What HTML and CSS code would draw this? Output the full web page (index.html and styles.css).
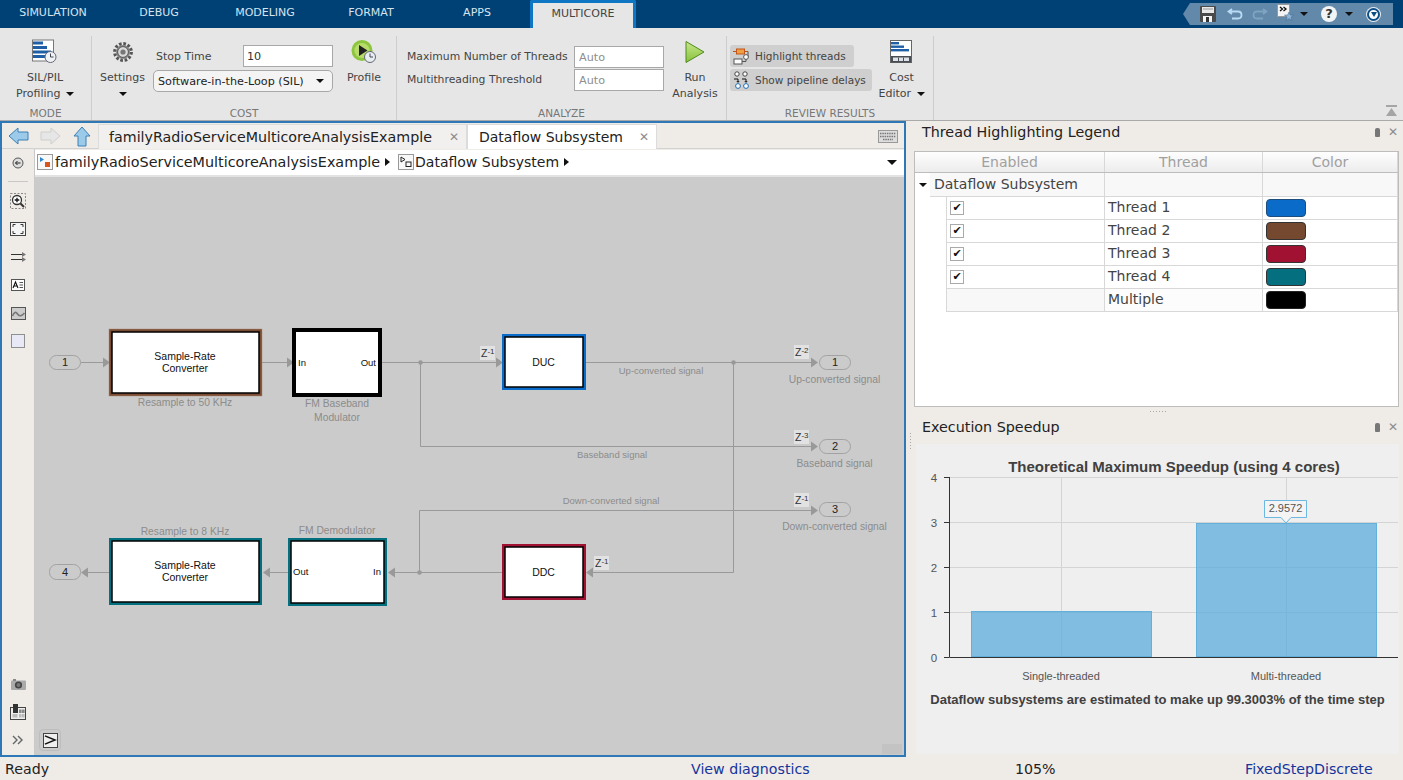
FILE: index.html
```html
<!DOCTYPE html>
<html lang="en">
<head>
<meta charset="utf-8">
<title>Multicore</title>
<link rel="stylesheet" href="styles.css">
</head>
<body>
<div class="app">
  <header class="topbar">
    <nav class="tabs">
      <div class="tab">SIMULATION</div>
      <div class="tab">DEBUG</div>
      <div class="tab">MODELING</div>
      <div class="tab">FORMAT</div>
      <div class="tab">APPS</div>
      <div class="tab tab-active">MULTICORE</div>
    </nav>
    <div class="qa">
      <svg class="qa-notch" width="7" height="22" viewBox="0 0 7 22"><polygon points="7,0 7,22 0,11" fill="#6288aa"/></svg>
      <div class="qa-bar">
        <svg width="16" height="16" viewBox="0 0 16 16"><rect x="0" y="0" width="16" height="16" rx="1" fill="#4a4a4a"/><rect x="2" y="1" width="12" height="6" fill="#e8e8e8"/><rect x="3" y="2.5" width="10" height="1" fill="#999"/><rect x="3" y="10" width="9" height="6" fill="#f4f4f4"/><rect x="6" y="11" width="3" height="5" fill="#333"/></svg>
        <svg class="qa-undo" width="16" height="14" viewBox="0 0 16 14"><path d="M5 2 L1.5 4.5 L5 7 M2 4.5 H11 Q14.5 4.5 14.5 8 Q14.5 11.5 11 11.5 H5" fill="none" stroke="#b9dcf5" stroke-width="1.8"/></svg>
        <svg class="qa-redo" width="16" height="14" viewBox="0 0 16 14"><path d="M11 2 L14.5 4.5 L11 7 M14 4.5 H5 Q1.5 4.5 1.5 8 Q1.5 11.5 5 11.5 H11" fill="none" stroke="#7fa3c0" stroke-width="1.8"/></svg>
        <svg class="qa-fav" width="17" height="17" viewBox="0 0 17 17"><rect x="0.5" y="0.5" width="12" height="12" fill="#f4f4f4" stroke="#999"/><path d="M3 3 L5.5 5 L3 7 M6.5 3 L9 5 L6.5 7" fill="none" stroke="#111" stroke-width="1.3"/><polygon points="12,8 13.3,11 16.5,11.2 14,13.2 15,16.5 12,14.7 9,16.5 10,13.2 7.5,11.2 10.7,11" fill="#8eb4d8" stroke="#4a6f92" stroke-width="0.6"/></svg>
        <span class="caret caret-qa"></span>
        <span class="qa-help">?</span>
        <span class="caret caret-qa2"></span>
        <span class="qa-circle"><span class="qa-circle-tri"></span></span>
      </div>
    </div>
  </header>

  <section class="ribbon">
    <div class="rsec rsec-mode">
      <div class="rbody">
        <div class="bigbtn bigbtn-mode">
          <svg class="bigicon" width="26" height="25" viewBox="0 0 26 25"><rect x="0.5" y="0.5" width="21" height="21" fill="#fff" stroke="#777"/><rect x="1" y="2" width="10" height="3" fill="#1f5fa6"/><rect x="1" y="6.5" width="14" height="3" fill="#1f5fa6"/><rect x="1" y="11" width="18" height="3" fill="#1f5fa6"/><rect x="1" y="15.5" width="13" height="3" fill="#1f5fa6"/><circle cx="18.5" cy="17.5" r="5.5" fill="#eef2f5" stroke="#667"/><path d="M18.5 14 V17.5 H21.5" fill="none" stroke="#445" stroke-width="1"/></svg>
          <span class="btxt">SIL/PIL</span>
          <span class="btxt">Profiling <span class="caret caret-inline"></span></span>
        </div>
      </div>
      <div class="rlabel">MODE</div>
    </div>

    <div class="rsec rsec-cost">
      <div class="rbody">
        <div class="bigbtn bigbtn-settings">
          <svg class="bigicon" width="22" height="22" viewBox="0 0 22 22"><circle cx="11" cy="11" r="8.2" fill="none" stroke="#555" stroke-width="3.4" stroke-dasharray="2.6 1.7"/><circle cx="11" cy="11" r="7" fill="#888"/><circle cx="11" cy="11" r="5.4" fill="#d9d9d9" stroke="#555"/><circle cx="11" cy="11" r="2.6" fill="#777"/></svg>
          <span class="btxt">Settings</span>
          <span class="btxt"><span class="caret"></span></span>
        </div>
        <div class="cost-fields">
          <div class="stop-row">
            <span class="flabel">Stop Time</span>
            <input class="field field-stop" value="10" readonly>
          </div>
          <div class="dropdown">Software-in-the-Loop (SIL)<span class="caret"></span></div>
        </div>
        <div class="bigbtn bigbtn-profile">
          <svg class="bigicon" width="26" height="24" viewBox="0 0 26 24"><circle cx="11" cy="10.5" r="10.5" fill="#8cc63f"/><circle cx="11" cy="10.5" r="7.6" fill="#b8dc6a"/><polygon points="8,5 8,16 16.5,10.5" fill="#222"/><circle cx="19" cy="17" r="5.5" fill="#e8edf1" stroke="#667"/><path d="M19 13.5 V17 H22" fill="none" stroke="#445"/></svg>
          <span class="btxt">Profile</span>
        </div>
      </div>
      <div class="rlabel">COST</div>
    </div>

    <div class="rsec rsec-analyze">
      <div class="rbody">
        <div class="analyze-grid">
          <span class="flabel">Maximum Number of Threads</span>
          <input class="field field-auto" placeholder="Auto" readonly>
          <span class="flabel">Multithreading Threshold</span>
          <input class="field field-auto" placeholder="Auto" readonly>
        </div>
        <div class="bigbtn bigbtn-run">
          <svg class="bigicon" width="20" height="23" viewBox="0 0 20 23"><defs><linearGradient id="rung" x1="0" y1="0" x2="0" y2="1"><stop offset="0" stop-color="#c8e68a"/><stop offset="1" stop-color="#86c23c"/></linearGradient></defs><polygon points="1,1 1,22 19,11.5" fill="url(#rung)" stroke="#4f8a1e"/></svg>
          <span class="btxt">Run</span>
          <span class="btxt">Analysis</span>
        </div>
      </div>
      <div class="rlabel">ANALYZE</div>
    </div>

    <div class="rsec rsec-review">
      <div class="rbody">
        <div class="toggles">
          <div class="toggle toggle-a">
            <svg width="17" height="17" viewBox="0 0 17 17"><rect x="3.5" y="1" width="8" height="5" fill="#f0a040" stroke="#c0541a"/><line x1="0" y1="3.5" x2="3.5" y2="3.5" stroke="#c0541a"/><line x1="11.5" y1="3.5" x2="15" y2="3.5" stroke="#c0541a"/><path d="M15 3.5 V9" stroke="#555" fill="none"/><circle cx="13" cy="9" r="2.4" fill="#fff" stroke="#555"/><rect x="1" y="11" width="8" height="5" fill="#fff" stroke="#555"/><path d="M9 13.5 H13 V11" stroke="#555" fill="none"/></svg>
            <span>Highlight threads</span>
          </div>
          <div class="toggle toggle-b">
            <svg width="17" height="18" viewBox="0 0 17 18"><circle cx="4" cy="3" r="2.2" fill="#fff" stroke="#444"/><circle cx="12" cy="3" r="2.2" fill="#fff" stroke="#444"/><circle cx="5" cy="15" r="2.4" fill="#fff" stroke="#1f6fb5"/><circle cx="13" cy="15" r="2.4" fill="#fff" stroke="#1f6fb5"/><path d="M1 8 H5 V11 M3.8 10 L5 11.4 L6.2 10 M9 8 H13 V11 M11.8 10 L13 11.4 L14.2 10" fill="none" stroke="#111"/></svg>
            <span>Show pipeline delays</span>
          </div>
        </div>
        <div class="bigbtn bigbtn-cost">
          <svg class="bigicon" width="23" height="24" viewBox="0 0 23 24"><rect x="0.5" y="0.5" width="21" height="22" fill="#fff" stroke="#666"/><rect x="1" y="2" width="8" height="2.4" fill="#1f5fa6"/><rect x="1" y="5.5" width="13" height="2.4" fill="#1f5fa6"/><rect x="1" y="9" width="18" height="2.4" fill="#1f5fa6"/><rect x="1" y="16" width="20" height="6.5" fill="#4a4f55"/><rect x="3" y="17.5" width="16" height="3.5" fill="#dde3e8"/><path d="M8.5 17.5 V21 M13.5 17.5 V21" stroke="#4a4f55"/></svg>
          <span class="btxt">Cost</span>
          <span class="btxt">Editor <span class="caret caret-inline"></span></span>
        </div>
      </div>
      <div class="rlabel">REVIEW RESULTS</div>
    </div>

    <div class="rsec-rest">
      <svg class="collapse" width="11" height="11" viewBox="0 0 11 11"><rect x="0" y="0" width="11" height="2" fill="#a5a5a5"/><polygon points="5.5,3 11,11 0,11" fill="#a5a5a5"/></svg>
    </div>
  </section>

  <main class="main">
    <section class="editor">
      <div class="ed-tabs">
        <div class="hist">
          <svg width="21" height="18" viewBox="0 0 21 18"><polygon points="1,9 10,1 10,5 20,5 20,13 10,13 10,17" fill="#9ccbea" stroke="#3d7fb5"/></svg>
          <svg width="21" height="18" viewBox="0 0 21 18"><polygon points="20,9 11,1 11,5 1,5 1,13 11,13 11,17" fill="#e6e6e6" stroke="#cfcfcf"/></svg>
          <svg width="18" height="21" viewBox="0 0 18 21"><polygon points="9,1 17,10 13,10 13,20 5,20 5,10 1,10" fill="#9ccbea" stroke="#3d7fb5"/></svg>
        </div>
        <div class="dtab">
          <span>familyRadioServiceMulticoreAnalysisExample</span><span class="x">✕</span>
        </div>
        <div class="dtab dtab-on">
          <span>Dataflow Subsystem</span><span class="x">✕</span>
        </div>
        <svg class="kbd" width="20" height="13" viewBox="0 0 20 13"><rect x="0.5" y="0.5" width="19" height="12" fill="#ddd" stroke="#999"/><path d="M2 3.5 H18 M2 6.5 H18 M5 9.5 H15" stroke="#777" stroke-width="1.6" stroke-dasharray="1.5 .8"/></svg>
      </div>
      <div class="ed-body">
        <aside class="palette">
          <div class="pal-top">
            <div class="pal-slot"><svg width="12" height="12" viewBox="0 0 12 12"><circle cx="6" cy="6" r="5" fill="#ddd" stroke="#555"/><path d="M8.5 6 H3.5 M5.5 4 L3.5 6 L5.5 8" fill="none" stroke="#222"/></svg></div>
            <div class="pal-sep"></div>
            <div class="pal-slot"><svg width="16" height="16" viewBox="0 0 16 16"><rect x="0.5" y="0.5" width="15" height="15" fill="none" stroke="#888" stroke-dasharray="2 1.5"/><circle cx="7" cy="7" r="4.5" fill="#fff" stroke="#333" stroke-width="1.3"/><path d="M4.7 7 H9.3 M7 4.7 V9.3" stroke="#111" stroke-width="1.3"/><path d="M10.5 10.5 L14 14" stroke="#333" stroke-width="2"/></svg></div>
            <div class="pal-slot"><svg width="16" height="14" viewBox="0 0 16 14"><rect x="0.5" y="0.5" width="15" height="13" fill="#f5f5f5" stroke="#444"/><path d="M3 5 V2.5 H5.5 M10.5 2.5 H13 V5 M13 9 V11.5 H10.5 M5.5 11.5 H3 V9" fill="none" stroke="#333"/></svg></div>
            <div class="pal-slot"><svg width="15" height="10" viewBox="0 0 15 10"><path d="M0 2.5 H13 M0 7.5 H13" stroke="#333"/><polygon points="11,0 15,2.5 11,5" fill="#777"/><polygon points="11,5 15,7.5 11,10" fill="#777"/></svg></div>
            <div class="pal-slot"><svg width="14" height="12" viewBox="0 0 14 12"><rect x="0.5" y="0.5" width="13" height="11" fill="#fff" stroke="#555"/><path d="M2 9 L4.5 3 L7 9 M3 7 H6" fill="none" stroke="#111" stroke-width="1.1"/><path d="M8.5 3.5 H12 M8.5 6 H12 M8.5 8.5 H12" stroke="#555"/></svg></div>
            <div class="pal-slot"><svg width="15" height="13" viewBox="0 0 15 13"><rect x="0.5" y="0.5" width="14" height="12" fill="#ccc" stroke="#555"/><path d="M1.5 9 Q4 3 6.5 7 T13.5 6" fill="none" stroke="#777" stroke-width="1.6"/></svg></div>
            <div class="pal-slot"><div class="pal-rect"></div></div>
          </div>
          <div class="pal-bottom">
            <div class="pal-slot"><svg width="15" height="11" viewBox="0 0 15 11"><rect x="0" y="1.5" width="15" height="9.5" rx="1" fill="#aaa"/><rect x="2" y="0" width="3" height="2" fill="#888"/><circle cx="7.5" cy="6" r="3.6" fill="#444"/><circle cx="7.5" cy="6" r="2" fill="#777"/></svg></div>
            <div class="pal-slot"><svg width="16" height="16" viewBox="0 0 16 16"><rect x="0.5" y="3.5" width="15" height="12" fill="#eee" stroke="#444"/><rect x="3" y="0" width="5" height="9" fill="#333"/><rect x="9" y="5.5" width="2.6" height="3.5" fill="#888"/><rect x="12" y="5.5" width="2.6" height="3.5" fill="#888"/><rect x="9" y="10" width="2.6" height="3.5" fill="#bbb"/><rect x="12" y="10" width="2.6" height="3.5" fill="#bbb"/><rect x="2.5" y="10" width="5" height="3.5" fill="#bbb"/></svg></div>
            <div class="pal-slot"><svg width="12" height="10" viewBox="0 0 12 10"><path d="M1 1 L5 5 L1 9 M6 1 L10 5 L6 9" fill="none" stroke="#666" stroke-width="1.4"/></svg></div>
          </div>
        </aside>
        <div class="ed-right">
          <div class="crumbs">
            <svg width="16" height="16" viewBox="0 0 16 16"><rect x="0.5" y="0.5" width="15" height="15" fill="#f8f8f8" stroke="#999"/><polygon points="3,3 3,8 7,5.5" fill="#2d86c9"/><rect x="8" y="8" width="5" height="5" fill="#d9541e"/></svg>
            <span class="crumb">familyRadioServiceMulticoreAnalysisExample</span>
            <span class="tri-right"></span>
            <svg width="16" height="16" viewBox="0 0 16 16"><rect x="0.5" y="0.5" width="15" height="15" fill="#f8f8f8" stroke="#999"/><path d="M3 3 L7 5.5 L3 8 Z" fill="none" stroke="#222"/><rect x="8" y="8" width="5" height="4.5" fill="none" stroke="#222"/></svg>
            <span class="crumb crumb-2">Dataflow Subsystem</span>
            <span class="tri-right"></span>
            <span class="caret caret-crumb"></span>
          </div>
          <div class="canvas">
            <svg class="diagram" width="869" height="580" viewBox="35 177 869 580">
              <g class="wires">
                <path d="M81 362.5H105"/>
                <path d="M262 362.5H288"/>
                <path d="M382 362.5H498"/>
                <path d="M420.5 362.5V446.5H813"/>
                <path d="M586 362.5H813"/>
                <path d="M733.5 362.5V572.5H590"/>
                <path d="M502 572.5H391"/>
                <path d="M419.5 572.5V510.5H813"/>
                <path d="M288 572.5H266"/>
                <path d="M109 572.5H85"/>
              </g>
              <g class="dots">
                <circle cx="420.5" cy="362.5" r="2.3"/>
                <circle cx="733.5" cy="362.5" r="2.3"/>
                <circle cx="419.5" cy="572.5" r="2.3"/>
              </g>
              <g class="arrows">
                <polygon points="103,357.5 103,367.5 110,362.5"/>
                <polygon points="287,357.5 287,367.5 294,362.5"/>
                <polygon points="496,357.5 496,367.5 503,362.5"/>
                <polygon points="811,357.5 811,367.5 818,362.5"/>
                <polygon points="811,441.5 811,451.5 818,446.5"/>
                <polygon points="811,505.5 811,515.5 818,510.5"/>
                <polygon points="593,567.5 593,577.5 586,572.5"/>
                <polygon points="395,567.5 395,577.5 388,572.5"/>
                <polygon points="270,567.5 270,577.5 263,572.5"/>
                <polygon points="88,567.5 88,577.5 81,572.5"/>
              </g>
              <g class="ports">
                <rect x="49.5" y="355.5" width="31" height="14" rx="7"/>
                <rect x="819.5" y="355.5" width="31" height="14" rx="7"/>
                <rect x="819.5" y="439.5" width="31" height="14" rx="7"/>
                <rect x="819.5" y="502.5" width="31" height="14" rx="7"/>
                <rect x="49.5" y="564.5" width="31" height="15" rx="7"/>
              </g>
              <g class="port-txt">
                <text x="65" y="366">1</text>
                <text x="835" y="366">1</text>
                <text x="835" y="450">2</text>
                <text x="835" y="513">3</text>
                <text x="65" y="576">4</text>
              </g>

              <rect class="b-brown" x="109" y="329" width="153" height="67"/>
              <rect class="b-inner" x="112" y="332" width="147" height="61"/>
              <rect class="b-black" x="294" y="330" width="86" height="65"/>
              <rect class="b-blue" x="502" y="334" width="84" height="56"/>
              <rect class="b-inner" x="505" y="337" width="78" height="50"/>
              <rect class="b-teal" x="109" y="538" width="153" height="67"/>
              <rect class="b-inner" x="112" y="541" width="147" height="61"/>
              <rect class="b-teal" x="288" y="538" width="99" height="68"/>
              <rect class="b-inner" x="291" y="541" width="93" height="62"/>
              <rect class="b-red" x="502" y="544" width="84" height="56"/>
              <rect class="b-inner" x="505" y="547" width="78" height="50"/>

              <g class="btxt-d">
                <text x="185" y="360">Sample-Rate</text>
                <text x="185" y="372">Converter</text>
                <text x="185" y="569">Sample-Rate</text>
                <text x="185" y="581">Converter</text>
                <text x="543.5" y="366">DUC</text>
                <text x="543.5" y="576">DDC</text>
              </g>
              <g class="ptxt-d">
                <text x="298" y="366">In</text>
                <text x="293" y="575">Out</text>
              </g>
              <g class="ptxt-d ptxt-end">
                <text x="376" y="366">Out</text>
                <text x="381" y="575">In</text>
              </g>
              <g class="glabels">
                <text x="185" y="406">Resample to 50 KHz</text>
                <text x="337" y="407">FM Baseband</text>
                <text x="337" y="421">Modulator</text>
                <text x="185" y="535">Resample to 8 KHz</text>
                <text x="337" y="534">FM Demodulator</text>
                <text class="small" x="661" y="374">Up-converted signal</text>
                <text class="small" x="612" y="458">Baseband signal</text>
                <text class="small" x="611" y="504">Down-converted signal</text>
                <text x="834.5" y="383">Up-converted signal</text>
                <text x="834.5" y="467">Baseband signal</text>
                <text x="834.5" y="530">Down-converted signal</text>
              </g>
              <g class="zbox">
                <rect x="480" y="346" width="15" height="14"/>
                <rect x="794" y="345" width="15" height="14"/>
                <rect x="794" y="430" width="15" height="14"/>
                <rect x="794" y="493" width="15" height="14"/>
                <rect x="594" y="556" width="15" height="14"/>
              </g>
              <g class="ztxt">
                <text x="481" y="357">Z<tspan class="sup" dy="-3">-1</tspan></text>
                <text x="795" y="356">Z<tspan class="sup" dy="-3">-2</tspan></text>
                <text x="795" y="441">Z<tspan class="sup" dy="-3">-3</tspan></text>
                <text x="795" y="504">Z<tspan class="sup" dy="-3">-1</tspan></text>
                <text x="595" y="567">Z<tspan class="sup" dy="-3">-1</tspan></text>
              </g>
              <g class="grip">
                <rect x="882" y="744" width="20" height="10"/>
              </g>
            </svg>
            <div class="cmd-wrap"><div class="cmd"><svg width="14" height="12" viewBox="0 0 14 12"><path d="M1 1.5 L12 6 L1 10.5" fill="none" stroke="#111" stroke-width="1.6"/></svg></div></div>
          </div>
        </div>
      </div>
    </section>

    <aside class="side">
      <div class="ptitle">
        <span>Thread Highlighting Legend</span>
        <span class="pctrl"><span class="pin"></span><span class="x">✕</span></span>
      </div>
      <div class="tablebox">
        <div class="trow thead"><div>Enabled</div><div>Thread</div><div>Color</div></div>
        <div class="trow tgroup">
          <div class="tg-first"><span class="tg-arrow"><span class="caret"></span></span><span class="tg-name">Dataflow Subsystem</span></div>
          <div></div><div></div>
        </div>
        <div class="trow tdata">
          <div class="tcheck"><span class="chk">✔</span></div><div>Thread 1</div><div class="tcolor"><span class="swatch s1"></span></div>
        </div>
        <div class="trow tdata">
          <div class="tcheck"><span class="chk">✔</span></div><div>Thread 2</div><div class="tcolor"><span class="swatch s2"></span></div>
        </div>
        <div class="trow tdata">
          <div class="tcheck"><span class="chk">✔</span></div><div>Thread 3</div><div class="tcolor"><span class="swatch s3"></span></div>
        </div>
        <div class="trow tdata">
          <div class="tcheck"><span class="chk">✔</span></div><div>Thread 4</div><div class="tcolor"><span class="swatch s4"></span></div>
        </div>
        <div class="trow tdata tmulti">
          <div class="tcheck"></div><div>Multiple</div><div class="tcolor"><span class="swatch s5"></span></div>
        </div>
      </div>
      <div class="splitter"></div>
      <div class="ptitle ptitle-2">
        <span>Execution Speedup</span>
        <span class="pctrl"><span class="pin"></span><span class="x">✕</span></span>
      </div>
      <div class="chartbox">
        <svg class="chart" width="483" height="310" viewBox="916 444 483 310">
          <text class="c-title" x="1174" y="472">Theoretical Maximum Speedup (using 4 cores)</text>
          <g class="c-grid">
            <path d="M949 477.5H1398M949 522.5H1398M949 567.5H1398M949 612.5H1398"/>
            <path d="M1061.5 477V657M1286.5 477V657"/>
          </g>
          <rect class="c-bar" x="971.5" y="611.5" width="180" height="45"/>
          <rect class="c-bar" x="1196.5" y="523.5" width="180" height="133"/>
          <g class="c-axis">
            <path d="M949.5 477V657.5H1398"/>
            <path d="M944 477.5H949M944 522.5H949M944 567.5H949M944 612.5H949M944 657.5H949"/>
          </g>
          <g class="c-num">
            <text x="934" y="482">4</text>
            <text x="934" y="527">3</text>
            <text x="934" y="572">2</text>
            <text x="934" y="617">1</text>
            <text x="934" y="662">0</text>
          </g>
          <path class="c-tip" d="M1264.5 500.5H1306.5V517.5H1291L1286 523L1281 517.5H1264.5Z"/>
          <text class="c-tiptxt" x="1285.5" y="512">2.9572</text>
          <text class="c-cat" x="1061" y="680">Single-threaded</text>
          <text class="c-cat" x="1286" y="680">Multi-threaded</text>
          <text class="c-note" x="1157.5" y="704">Dataflow subsystems are estimated to make up 99.3003% of the time step</text>
        </svg>
      </div>
    </aside>
  </main>

  <footer class="status">
    <span class="st-ready">Ready</span>
    <span class="st-link st-diag">View diagnostics</span>
    <span class="st-zoom">105%</span>
    <span class="st-link st-solver">FixedStepDiscrete</span>
  </footer>
</div>
</body>
</html>
```
FILE: styles.css
```css
* { box-sizing: border-box; }
html, body { margin: 0; padding: 0; height: 100%; overflow: hidden; }
body { font-family: "DejaVu Sans", sans-serif; color: #222; background: #efebe7; }
.app { width: 1403px; height: 780px; display: flex; flex-direction: column; }

/* top bar */
.topbar { height: 28px; background: #004175; display: flex; justify-content: space-between; flex: none; padding-right: 10px; }
.tabs { display: flex; }
.tab { width: 106px; height: 28px; line-height: 26px; text-align: center; font-size: 11px; color: #d6e4ef; }
.tab-active { background: #e6e6e6; color: #444; border: 3px solid #0f76c4; border-bottom: 0; border-radius: 2px 2px 0 0; line-height: 21px; }
.qa { display: flex; align-items: flex-start; padding-top: 3px; }
.qa-notch { display: block; }
.qa-bar { width: 203px; height: 22px; background: #6288aa; display: flex; align-items: center; padding-left: 10px; }
.qa-undo { margin-left: 11px; }
.qa-redo { margin-left: 9px; }
.qa-fav { margin: -3px 0 0 9px; }
.caret { display: inline-block; width: 0; height: 0; border-left: 4px solid transparent; border-right: 4px solid transparent; border-top: 4px solid #111; vertical-align: middle; }
.caret-qa { margin-left: 6px; }
.qa-help { width: 16px; height: 16px; margin-left: 13px; border-radius: 50%; background: #f2f4f6; color: #333; font-weight: 700; font-size: 13px; line-height: 16px; text-align: center; }
.caret-qa2 { margin-left: 8px; }
.qa-circle { width: 13px; height: 13px; margin-left: 14px; border-radius: 50%; background: #fff; border: 2px solid #0c4f86; box-shadow: 0 0 0 1px #e8eef3; display: flex; align-items: center; justify-content: center; }
.qa-circle-tri { width: 0; height: 0; border-left: 3.5px solid transparent; border-right: 3.5px solid transparent; border-top: 5px solid #0c4f86; }

/* ribbon */
.ribbon { height: 93px; flex: none; background: #e6e6e6; border-bottom: 1px solid #a9a9a9; display: flex; padding-top: 8px; font-size: 11px; color: #444; }
.rsec { display: flex; flex-direction: column; border-right: 1px solid #cdcdcd; height: 84px; }
.rsec-mode { width: 92px; }
.rsec-cost { width: 305px; }
.rsec-analyze { width: 330px; }
.rsec-review { width: 207px; }
.rsec-rest { flex: 1; display: flex; align-items: flex-end; justify-content: flex-end; padding: 0 6px 4px 0; }
.rbody { flex: 1; display: flex; min-height: 0; }
.rlabel { height: 16px; line-height: 18px; text-align: center; font-size: 10.5px; color: #777; }
.bigbtn { display: flex; flex-direction: column; align-items: center; }
.bigicon { height: 26px; margin-top: 3px; margin-bottom: 5px; flex: none; }
.btxt { line-height: 16px; height: 16px; white-space: nowrap; }
.bigbtn-mode { width: 90px; }
.bigbtn-settings { width: 61px; }
.bigbtn-profile { width: 62px; }
.bigbtn-run { width: 65px; }
.bigbtn-cost { width: 49px; }
.caret-inline { margin-left: 2px; }
.cost-fields { width: 180px; display: flex; flex-direction: column; padding-top: 9px; }
.stop-row { display: flex; align-items: center; height: 22px; padding-left: 3px; }
.stop-row .flabel { width: 87px; }
.flabel { white-space: nowrap; color: #444; }
.field { height: 22px; border: 1px solid #a8a8a8; background: #fff; font: 11.2px "DejaVu Sans", sans-serif; padding: 2px 3px; color: #333; outline: 0; }
.field::placeholder { color: #8e8e8e; opacity: 1; }
.field-stop { width: 90px; }
.dropdown { margin-top: 3px; height: 22px; border: 1px solid #a8a8a8; border-radius: 5px; background: #f4f4f4; line-height: 21px; padding-left: 4px; color: #222; display: flex; justify-content: space-between; align-items: center; padding-right: 8px; white-space: nowrap; font-size: 11.2px; }
.analyze-grid { margin-left: 10px; width: 257px; display: grid; grid-template-columns: 167px 90px; grid-auto-rows: 22px; row-gap: 1px; align-items: center; padding-top: 10px; }
.analyze-grid .flabel { font-size: 10.8px; margin-top: -2px; }
.field-auto { width: 90px; height: 22px; padding-left: 4px; }
.toggles { width: 147px; margin-left: 3px; padding-top: 9px; display: flex; flex-direction: column; gap: 2px; }
.toggle { height: 22px; background: #cfcfcf; border-radius: 3px; display: flex; align-items: center; padding-left: 3px; gap: 5px; white-space: nowrap; color: #444; font-size: 10.5px; }
.toggle svg { flex: none; }
.toggle-a { width: 124px; }
.toggle-b { width: 142px; }
.collapse { display: block; }

/* main */
.main { flex: 1; display: flex; min-height: 0; }
.editor { width: 906px; border: 2px solid #2f78b7; background: #efebe7; display: flex; flex-direction: column; }
.ed-tabs { height: 26px; flex: none; display: flex; align-items: center; border-bottom: 1px solid #d2d2d2; padding-top: 1px; }
.hist { width: 96px; display: flex; justify-content: flex-start; align-items: center; padding-left: 6px; gap: 11px; }
.hist svg:last-child { margin-left: 1px; }
.dtab { height: 25px; display: flex; align-items: center; justify-content: space-between; padding: 0 7px 0 10px; font-size: 14.25px; background: #f1f0ef; border: 1px solid #dcdcdc; border-bottom: 0; color: #222; white-space: nowrap; }
.dtab:nth-child(2) { width: 369px; }
.dtab-on { width: 190px; background: #fff; padding-left: 11px; font-size: 14px; }
.x { font-size: 12px; color: #8c8c8c; line-height: 1; }
.kbd { margin-left: auto; margin-right: 6px; }
.ed-body { flex: 1; display: flex; min-height: 0; }
.palette { width: 33px; flex: none; border-right: 1px solid #c9c9c9; display: flex; flex-direction: column; justify-content: space-between; align-items: stretch; background: #efebe7; }
.pal-top { display: flex; flex-direction: column; align-items: center; }
.pal-slot { height: 28px; display: flex; align-items: center; justify-content: center; }
.pal-slot svg { display: block; }
.pal-sep { width: 20px; height: 1px; background: #c8c8c8; margin: 4px 0 5px; }
.pal-rect { width: 14px; height: 14px; background: #e8e8f6; border: 1.5px solid #8f8f8f; }
.pal-bottom { display: flex; flex-direction: column; align-items: center; padding-bottom: 1px; }
.ed-right { flex: 1; display: flex; flex-direction: column; min-width: 0; }
.crumbs { height: 28px; flex: none; background: #fff; border-top: 1px solid #efebe7; border-bottom: 2px solid #e2e2e2; display: flex; align-items: center; padding: 0 4px 1px 2px; gap: 2px; font-size: 14.35px; color: #222; }
.crumb { white-space: nowrap; }
.crumb-2 { font-size: 14px; margin-left: -1px; }
.tri-right { width: 0; height: 0; border-top: 4.5px solid transparent; border-bottom: 4.5px solid transparent; border-left: 5px solid #111; margin: 0 6px 0 3px; }
.caret-crumb { margin-left: auto; margin-right: 3px; border-left-width: 5px; border-right-width: 5px; border-top-width: 5px; }
.canvas { flex: 1; background: #cbcbcb; position: relative; min-height: 0; overflow: hidden; }
.diagram { position: absolute; left: 0; top: 0; display: block; }
.cmd-wrap { position: absolute; left: 4px; bottom: 4px; width: 22px; height: 22px; border: 1px solid #bdbdbd; border-radius: 4px; display: flex; align-items: center; justify-content: center; }
.cmd { width: 15px; height: 15px; background: #efefef; border: 1px solid #444; display: flex; align-items: center; justify-content: center; }

/* diagram */
.wires path { fill: none; stroke: #999; stroke-width: 1; }
.dots circle { fill: #999; }
.arrows polygon { fill: #999; }
.ports rect { fill: #cbcbcb; stroke: #a2a2a2; stroke-width: 1; }
.port-txt text { font: 11px "Liberation Sans", sans-serif; fill: #222; text-anchor: middle; }
.b-brown { fill: #7b4b32; stroke: #a98b7a; stroke-width: 0.5; }
.b-blue { fill: #0a6bc9; }
.b-teal { fill: #04707f; }
.b-red { fill: #a11232; }
.b-inner { fill: #fff; stroke: #000; stroke-width: 1.5; }
.b-black { fill: #fff; stroke: #000; stroke-width: 4; }
.btxt-d text { font: 10.5px "Liberation Sans", sans-serif; fill: #111; text-anchor: middle; }
.ptxt-d text { font: 9.5px "Liberation Sans", sans-serif; fill: #111; }
.ptxt-end text { text-anchor: end; }
.glabels text { font: 10.3px "Liberation Sans", sans-serif; fill: #8c8c8c; text-anchor: middle; }
.glabels text.small { font-size: 9.5px; }
.zbox rect { fill: #e2e2e2; }
.ztxt text { font: 10.5px "Liberation Sans", sans-serif; fill: #333; }
.ztxt .sup { font-size: 8px; }
.grip rect { fill: #c3c3c3; }

/* side */
.side { flex: 1; min-width: 0; display: flex; flex-direction: column; background: #efebe7; position: relative; }
.side::before { content: ""; position: absolute; left: 4px; top: 312px; width: 1px; height: 17px; background: repeating-linear-gradient(#aaa 0 1px, transparent 1px 3px); }
.ptitle { height: 30px; flex: none; display: flex; align-items: center; justify-content: space-between; padding: 0 5px 8px 16px; font-size: 14.3px; color: #222; }
.ptitle-2 { height: 25px; padding-bottom: 9px; }
.pctrl { display: flex; align-items: center; gap: 8px; }
.pin { width: 5px; height: 9px; background: #777; border-radius: 2px 2px 1px 1px; }
.tablebox { height: 256px; margin: 0 4px 0 8px; flex: none; border: 1px solid #bdbdbd; background: #fff; font-size: 14px; color: #444; }
.trow { display: grid; grid-template-columns: 190px 158px 135px; height: 23px; }
.trow > div { border-right: 1px solid #d8d8d8; border-bottom: 1px solid #d8d8d8; line-height: 20px; padding-left: 3px; white-space: nowrap; }
.thead { height: 21px; background: linear-gradient(#fefefe, #ececec); border-bottom: 1px solid #bdbdbd; }
.thead > div { text-align: center; color: #a0a0a0; line-height: 20px; padding: 0; border-bottom: 0; }
.tgroup { background: #fff; height: 24px; }
.tgroup > div { background: #f8f8f8; line-height: 22px; }
.trow > .tg-first { display: flex; padding: 0; background: #fff; border-bottom: 0; }
.tg-arrow { width: 15px; display: flex; align-items: center; justify-content: center; }
.tg-name { flex: 1; background: #f8f8f8; padding-left: 4px; border-bottom: 1px solid #d8d8d8; }
.trow > .tcheck { margin-left: 31px; border-left: 1px solid #d8d8d8; padding: 0 0 0 3px; display: flex; align-items: center; }
.chk { width: 14px; height: 14px; border: 1px solid #aaa; background: #fff; font-size: 11px; line-height: 12px; text-align: center; color: #111; }
.tmulti .tcheck { background: #f8f8f8; }
.tmulti > div:nth-child(2) { background: #fcfcfc; }
.trow > .tcolor { display: flex; align-items: center; padding-left: 3px; }
.swatch { width: 40px; height: 18px; border-radius: 4px; border: 1px solid #333; }
.s1 { background: #0a6bc9; border-color: #1d4e7e; }
.s2 { background: #74492f; }
.s3 { background: #a11232; }
.s4 { background: #04707f; }
.s5 { background: #000; border-color: #222; }
.splitter { height: 12px; flex: none; position: relative; }
.splitter::after { content: ""; position: absolute; left: 244px; top: 4px; width: 16px; height: 1px; background: repeating-linear-gradient(90deg, #aaa 0 1px, transparent 1px 3px); }
.chartbox { height: 310px; flex: none; margin: 0 4px 0 10px; background: #efefef; }
.chart { display: block; }
.c-title { font: 700 15px "Liberation Sans", sans-serif; fill: #404040; text-anchor: middle; }
.c-grid path { fill: none; stroke: #d4d4d4; stroke-width: 1; }
.c-bar { fill: #5bacdb; fill-opacity: .75; stroke: #63b0dc; stroke-width: 1; }
.c-axis path { fill: none; stroke: #333; stroke-width: 1; }
.c-num text { font: 11.5px "Liberation Sans", sans-serif; fill: #555; text-anchor: middle; }
.c-tip { fill: #f4f4f4; stroke: #6cb8e0; stroke-width: 1; }
.c-tiptxt { font: 11px "Liberation Sans", sans-serif; fill: #555; text-anchor: middle; }
.c-cat { font: 11px "Liberation Sans", sans-serif; fill: #555; text-anchor: middle; }
.c-note { font: 700 13px "Liberation Sans", sans-serif; fill: #404040; text-anchor: middle; }

/* status */
.status { height: 23px; flex: none; background: #efebe7; display: grid; grid-template-columns: 691px 324px 230px 1fr; align-items: center; font-size: 14.2px; color: #222; }
.st-ready { padding-left: 5px; }
.st-link { color: #16349c; }
```
